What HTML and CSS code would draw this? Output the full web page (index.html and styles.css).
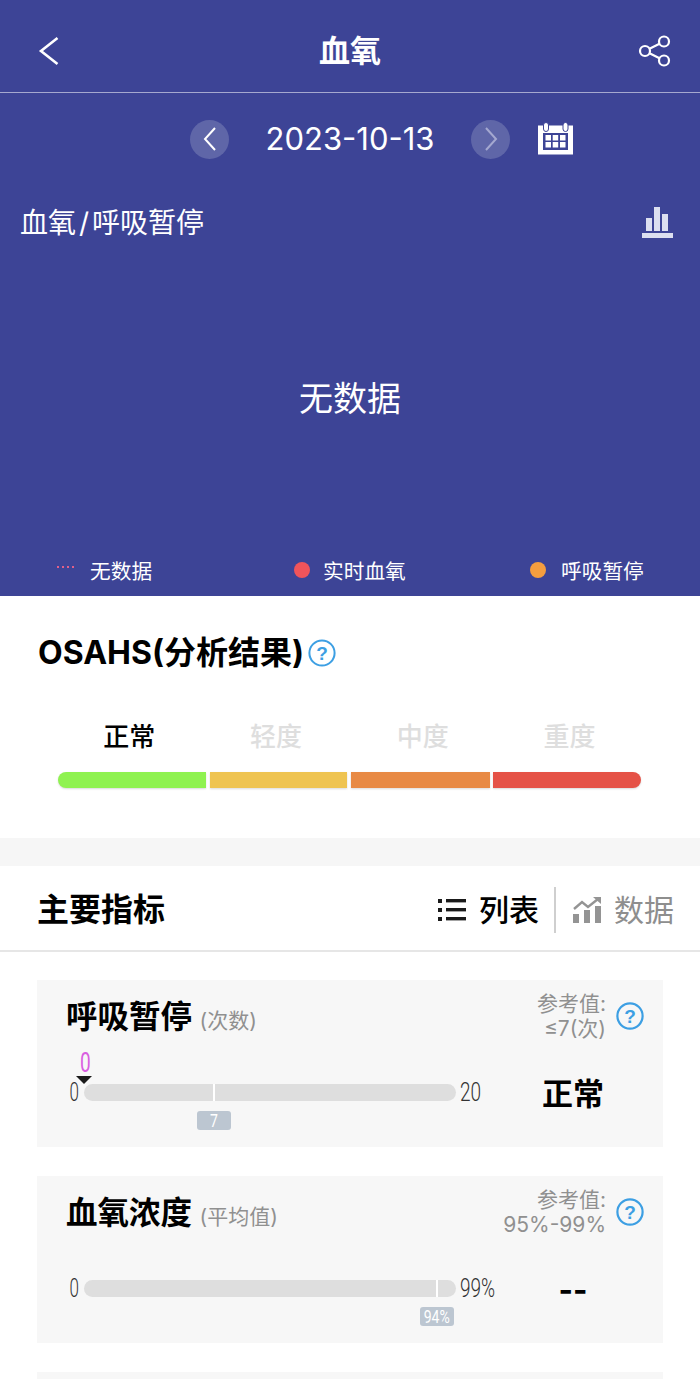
FILE: index.html
```html
<!DOCTYPE html>
<html lang="zh">
<head>
<meta charset="utf-8">
<title>血氧</title>
<link rel="stylesheet" href="styles.css">
</head>
<body>
<div class="page">
  <section class="hero">
    <header class="topbar">
      <svg class="back" width="24" height="32" viewBox="0 0 24 32"><path d="M22.5 3 L6 16 L22.5 29" fill="none" stroke="#fff" stroke-width="2.6"/></svg>
      <h1 class="page-title">血氧</h1>
      <svg class="share" width="34" height="34" viewBox="0 0 34 34"><g fill="none" stroke="#fff" stroke-width="2.2"><circle cx="27" cy="7.5" r="5"/><circle cx="27" cy="26.5" r="5"/><circle cx="8" cy="17" r="5"/><path d="M12.5 14.7 L22.5 9.7 M12.5 19.3 L22.5 24.3"/></g></svg>
    </header>
    <div class="date-row">
      <span class="round-btn"><svg width="14" height="26" viewBox="0 0 14 26"><path d="M12 2 L2 13 L12 24" fill="none" stroke="#fff" stroke-width="2"/></svg></span>
      <span class="date">2023-10-13</span>
      <span class="round-btn"><svg width="14" height="26" viewBox="0 0 14 26"><path d="M2 2 L12 13 L2 24" fill="none" stroke="#a4a8d0" stroke-width="2"/></svg></span>
      <svg class="calendar" width="35" height="33" viewBox="0 0 35 33"><path d="M0 3.5 H35 V32.5 H0 Z" fill="#fff"/><rect x="5" y="11" width="25" height="17" fill="#3d4496"/><g fill="#fff"><rect x="7.5" y="13" width="5.5" height="5.5"/><rect x="14.7" y="13" width="5.5" height="5.5"/><rect x="22" y="13" width="5.5" height="5.5"/><rect x="7.5" y="20" width="5.5" height="5.5"/><rect x="14.7" y="20" width="5.5" height="5.5"/><rect x="22" y="20" width="5.5" height="5.5"/></g><g fill="#fff" stroke="#3d4496" stroke-width="1"><rect x="5.5" y="0.5" width="5" height="9" rx="2.5"/><rect x="25" y="0.5" width="5" height="9" rx="2.5"/></g></svg>
    </div>
    <div class="chart-head">
      <span class="chart-title">血氧<span class="slash">/</span>呼吸暂停</span>
      <svg width="31" height="31" viewBox="0 0 31 31"><g fill="#dcdff0"><rect x="4" y="11" width="6" height="13"/><rect x="12" y="0" width="6" height="24"/><rect x="20" y="7" width="6" height="17"/><rect x="0" y="26" width="31" height="5"/></g></svg>
    </div>
    <div class="no-data">无数据</div>
    <div class="legend">
      <span class="legend-item"><i class="dots"></i>无数据</span>
      <span class="legend-item"><i class="dot dot-red"></i>实时血氧</span>
      <span class="legend-item"><i class="dot dot-orange"></i>呼吸暂停</span>
    </div>
  </section>

  <section class="osahs">
    <h2 class="osahs-title">OSAHS(分析结果)<svg class="help-small" width="28" height="28" viewBox="0 0 28 28"><circle cx="14" cy="14" r="12.6" fill="none" stroke="#3d9fe3" stroke-width="2"/><text x="14" y="20.5" text-anchor="middle" class="help-mark">?</text></svg></h2>
    <div class="levels">
      <span class="level level-on">正常</span>
      <span class="level">轻度</span>
      <span class="level">中度</span>
      <span class="level">重度</span>
    </div>
    <div class="scale">
      <i class="seg seg-1"></i><i class="seg seg-2"></i><i class="seg seg-3"></i><i class="seg seg-4"></i>
    </div>
  </section>

  <section class="metrics">
    <div class="metrics-head">
      <h2 class="metrics-title">主要指标</h2>
      <div class="tabs">
        <span class="tab tab-on"><svg width="28" height="22" viewBox="0 0 28 22"><g fill="#1a1a1a"><rect x="0" y="0" width="4" height="4"/><rect x="0" y="9" width="4" height="4"/><rect x="0" y="18" width="4" height="4"/><rect x="8" y="0" width="20" height="3.4"/><rect x="8" y="9" width="20" height="3.4"/><rect x="8" y="18" width="20" height="3.4"/></g></svg>列表</span>
        <i class="tab-sep"></i>
        <span class="tab"><svg width="28" height="26" viewBox="0 0 28 26"><g fill="#949494"><rect x="0" y="17" width="6" height="9"/><rect x="11" y="13" width="6" height="13"/><rect x="22" y="9" width="6" height="17"/></g><path d="M1 12 L9 5 L15 10 L25 2" fill="none" stroke="#949494" stroke-width="2.4"/><path d="M20 0 H28 V7 Z" fill="#949494"/></svg>数据</span>
      </div>
    </div>

    <article class="card">
      <div class="card-head">
        <div class="card-title">呼吸暂停 <small>(次数)</small></div>
        <div class="ref"><p>参考值:<br>≤7(次)</p><svg width="28" height="28" viewBox="0 0 28 28"><circle cx="14" cy="14" r="12.6" fill="none" stroke="#3d9fe3" stroke-width="2.2"/><text x="14" y="20.5" text-anchor="middle" class="help-mark">?</text></svg></div>
      </div>
      <div class="meter">
        <span class="min">0</span>
        <div class="track">
          <span class="value">0</span><i class="pointer"></i>
          <i class="tick" style="left:34.6%"></i>
          <span class="badge" style="left:34.6%"><span class="badge-text">7</span></span>
        </div>
        <span class="max">20</span>
        <strong class="status">正常</strong>
      </div>
    </article>

    <article class="card">
      <div class="card-head">
        <div class="card-title">血氧浓度 <small>(平均值)</small></div>
        <div class="ref"><p>参考值:<br>95%-99%</p><svg width="28" height="28" viewBox="0 0 28 28"><circle cx="14" cy="14" r="12.6" fill="none" stroke="#3d9fe3" stroke-width="2.2"/><text x="14" y="20.5" text-anchor="middle" class="help-mark">?</text></svg></div>
      </div>
      <div class="meter">
        <span class="min">0</span>
        <div class="track">
          <i class="tick" style="left:94.6%"></i>
          <span class="badge" style="left:94.6%"><span class="badge-text">94%</span></span>
        </div>
        <span class="max">99%</span>
        <strong class="status">--</strong>
      </div>
    </article>

    <article class="card"></article>
  </section>
</div>
</body>
</html>
```
FILE: styles.css
```css
* { box-sizing: border-box; }
html, body { margin: 0; padding: 0; background: #fff; }
body { font-family: Inter, "Noto Sans CJK SC", sans-serif; color: #000; }
h1, h2, p { margin: 0; }
i { display: block; }
.page { width: 700px; height: 1379px; overflow: hidden; }

.hero { height: 596px; background: #3d4496; color: #fff; display: flex; flex-direction: column; }
.topbar { height: 93px; flex: none; border-bottom: 1px solid #a6a9cf; display: flex; align-items: center; justify-content: space-between; padding: 9px 29px 0 35px; }
.page-title { font-size: 31px; font-weight: 700; line-height: 40px; margin-left: 4px; }
.date-row { height: 92px; flex: none; display: flex; align-items: center; padding-left: 190px; }
.round-btn { width: 39px; height: 39px; border-radius: 50%; background: #5f66a8; display: flex; align-items: center; justify-content: center; }
.date { width: 242px; text-align: center; font-size: 31px; font-weight: 400; line-height: 40px; }
.calendar { margin-left: 28px; margin-top: -1px; }
.chart-head { height: 74px; flex: none; display: flex; align-items: center; justify-content: space-between; padding: 0 27px 0 20px; }
.chart-title { font-size: 28px; line-height: 36px; margin-top: 1px; }
.slash { margin: 0 3px; }
.no-data { flex: 1; display: flex; align-items: center; justify-content: center; font-size: 34px; padding-bottom: 13px; }
.legend { height: 50px; flex: none; display: grid; grid-template-columns: 237px 236px auto; align-items: center; padding: 0 0 3px 57px; font-size: 20.7px; }
.legend-item { display: flex; align-items: center; }
.dots { width: 17px; height: 2px; margin-right: 16px; margin-top: -6px; background: repeating-linear-gradient(90deg, #e0608a 0 2px, transparent 2px 5px); }
.dot { width: 16px; height: 16px; border-radius: 50%; margin-right: 13px; }
.dot-red { background: #f0545a; }
.dot-orange { background: #f59e3f; margin-right: 15px; }

.osahs { height: 242px; padding: 36px 59px 0 38px; }
.osahs-title { font-size: 32px; font-weight: 700; line-height: 42px; display: flex; align-items: center; }
.help-small { margin-left: 4px; }
.help-mark { font-family: "Liberation Sans", sans-serif; font-size: 19px; font-weight: 700; fill: #3d9fe3; }
.levels { display: grid; grid-template-columns: repeat(4, 1fr); margin: 45px -2px 0 18px; font-size: 26px; line-height: 36px; font-weight: 500; text-align: center; color: #dedede; }
.level-on { color: #000; }
.scale { display: flex; height: 16px; margin: 17px 0 0 20px; }
.seg { height: 16px; box-shadow: 0 1px 2px rgba(0,0,0,.15); }
.seg-1 { width: 148px; background: #8ff250; border-radius: 8px 0 0 8px; }
.seg-2 { width: 137px; margin-left: 4px; background: #efc451; }
.seg-3 { width: 139px; margin-left: 4px; background: #e88a45; }
.seg-4 { width: 148px; margin-left: 3px; background: #e55247; border-radius: 0 8px 8px 0; }

.metrics { border-top: 28px solid #f6f6f6; }
.metrics-head { height: 86px; border-bottom: 2px solid #e6e6e6; display: flex; align-items: center; justify-content: space-between; padding: 4px 26px 0 37px; }
.metrics-title { font-size: 32px; font-weight: 700; line-height: 44px; }
.tabs { display: flex; align-items: center; }
.tab { display: flex; align-items: center; gap: 13px; font-size: 30px; line-height: 40px; color: #8e8e8e; }
.tab-on { color: #000; font-weight: 500; }
.tab-sep { width: 2px; height: 46px; background: #cfcfcf; margin: 0 17px 0 15px; }

.card { height: 167px; margin: 29px 37px 0; padding-top: 11px; background: #f7f7f7; }
.metrics-head + .card { margin-top: 28px; }
.card-head { height: 50px; display: flex; align-items: center; justify-content: space-between; padding: 0 19px 0 29px; }
.card-title { font-size: 31.5px; font-weight: 700; line-height: 44px; margin-top: 6px; }
.card-title small { font-size: 21px; font-weight: 400; color: #909090; }
.ref { display: flex; align-items: center; gap: 10px; }
.ref p { font-size: 21px; line-height: 25px; text-align: right; color: #909090; }
.meter { height: 17px; margin-top: 43px; display: flex; align-items: center; }
.min { width: 42px; margin-right: 5px; text-align: right; transform: scaleX(.68); transform-origin: right center; }
.min, .max { font-family: Roboto, sans-serif; font-weight: 300; font-size: 25px; line-height: 20px; color: #333; }
.track { position: relative; width: 372px; height: 17px; border-radius: 9px; background: #dedede; flex: none; }
.tick { position: absolute; top: 0; width: 2.5px; height: 17px; background: #fff; }
.badge { position: absolute; top: 27px; width: 34px; height: 19px; margin-left: -16px; border-radius: 3px; background: #bcc6d1; color: #fff; display: flex; justify-content: center; }
.badge-text { font-family: Roboto, sans-serif; font-size: 18px; line-height: 19px; white-space: nowrap; transform: scaleX(.78); }
.value { position: absolute; left: -6px; top: -33px; width: 12px; color: #d95ee0; font-family: Roboto, sans-serif; font-size: 28px; line-height: 24px; text-align: center; transform: scaleX(.68); }
.pointer { position: absolute; left: -8px; top: -8px; width: 0; height: 0; border-left: 8px solid transparent; border-right: 8px solid transparent; border-top: 8px solid #1a1a1a; }
.max { width: 40px; margin-left: 4px; flex: none; white-space: nowrap; transform: scaleX(.76); transform-origin: left center; }
.status { width: 146px; text-align: center; font-size: 31px; font-weight: 700; line-height: 40px; margin-top: 2px; }
```
